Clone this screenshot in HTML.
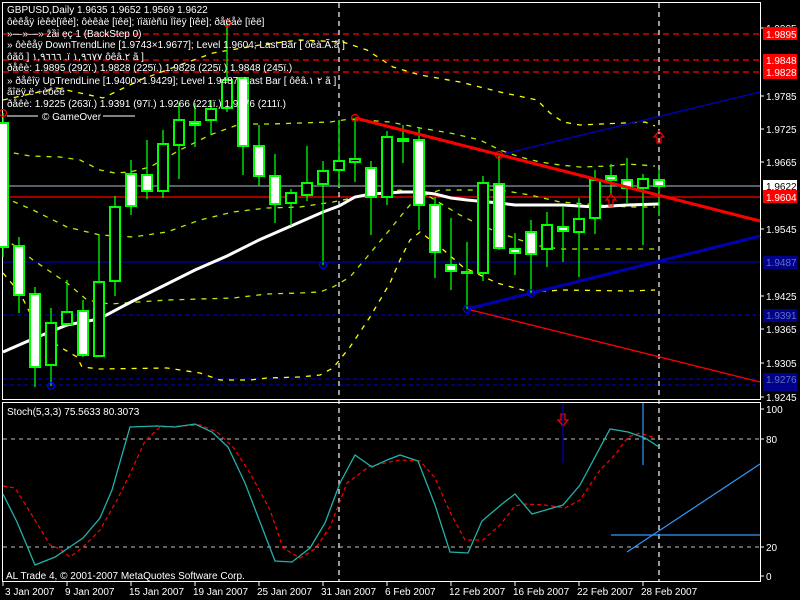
<!DOCTYPE html>
<html><head><meta charset="utf-8"><style>
html,body{margin:0;padding:0;background:#000;width:800px;height:600px;overflow:hidden}
svg{display:block}
text{font-family:"Liberation Sans","DejaVu Sans",sans-serif;font-size:10px;fill:#fff}
</style></head><body>
<svg width="800" height="600" viewBox="0 0 800 600" xmlns="http://www.w3.org/2000/svg">
<rect width="800" height="600" fill="#000"/>
<rect x="2.5" y="2.5" width="758" height="397" fill="none" stroke="#fff" stroke-width="1"/>
<rect x="2.5" y="402.5" width="758" height="179" fill="none" stroke="#fff" stroke-width="1"/>

<g stroke-width="1.2">
<line x1="3" y1="34" x2="760" y2="34" stroke="#f00" stroke-dasharray="6,4"/>
<line x1="3" y1="60" x2="760" y2="60" stroke="#f00" stroke-dasharray="6,4"/>
<line x1="3" y1="72" x2="760" y2="72" stroke="#f00" stroke-dasharray="6,4"/>
<line x1="3" y1="186" x2="760" y2="186" stroke="#8898a8"/>
<line x1="3" y1="197" x2="760" y2="197" stroke="#f00"/>
<line x1="3" y1="262" x2="760" y2="262" stroke="#0000a8"/>
<line x1="3" y1="315" x2="760" y2="315" stroke="#0000b0" stroke-dasharray="4,3"/>
<line x1="3" y1="379" x2="760" y2="379" stroke="#0000b0" stroke-dasharray="4,3"/>
<line x1="3" y1="385" x2="760" y2="385" stroke="#0000b0" stroke-dasharray="4,3"/>
</g>
<line x1="339" y1="3" x2="339" y2="582" stroke="#fff" stroke-dasharray="5,4" stroke-width="1.2"/>
<line x1="659" y1="3" x2="659" y2="582" stroke="#fff" stroke-dasharray="5,4" stroke-width="1.2"/>

<g fill="none" stroke-dasharray="5,6" stroke-width="1.3">
<polyline stroke="#ffff00" points="3,100 57,88 103,98 140,80 180,65 213,53 260,45 300,40 343,42 367,50 393,67 420,75 460,82 500,92 537,100 550,113 563,122 580,125 645,122 655,126"/>
<polyline stroke="#b0f000" points="3,151 30,156 60,157 80,160 100,170 115,173 130,172 150,167 180,150 210,135 240,124 270,124 300,123 330,122 350,119 390,122 420,128 450,133 480,140 500,150 520,157 540,162 560,165 580,167 610,166 627,164 655,166"/>
<polyline stroke="#b0f000" points="3,237 33,260 67,283 87,300 110,304 167,300 200,299 233,298 267,294 300,293 320,292 333,287 350,277 367,257 387,233 400,217 410,205 420,197 440,190 470,190 500,190 530,195 560,202 600,205 630,207 655,207"/>
<polyline stroke="#b0f000" points="3,197 33,210 67,227 100,235 133,237 167,232 200,220 233,212 267,208 300,207 333,202 367,195 400,190 430,197 460,215 480,225 500,233 520,240 540,246 560,249 600,249 655,249"/>
<polyline stroke="#ffff00" points="3,273 20,293 30,313 40,333 60,347 77,357 82,367 100,369 167,368 200,373 220,380 250,380 267,378 300,377 320,375 333,368 350,347 370,317 390,283 400,260 410,240 420,232 440,247 463,267 497,283 530,292 563,290 630,291 655,290"/>
</g>

<line x1="499" y1="155" x2="760" y2="92" stroke="#0000c0" stroke-width="1.3"/>
<line x1="467" y1="309" x2="760" y2="382" stroke="#f00" stroke-width="1.3"/>
<line x1="467" y1="309" x2="760" y2="236" stroke="#0000b0" stroke-width="3"/>

<polyline fill="none" stroke="#fff" stroke-width="3" points="3,352 35,338 67,325 99,319 131,302 163,286 195,270 227,256 259,240 291,226 323,212 339,206 355,197 371,194 403,192 419,192 435,194 451,198 467,200 499,203 515,205 563,205 579,206 595,207 611,206 627,205 659,204"/>

<g stroke="#00ff00" stroke-width="1.3">
<line x1="3" y1="113" x2="3" y2="257"/><line x1="19" y1="237" x2="19" y2="313"/><line x1="35" y1="287" x2="35" y2="387"/><line x1="51" y1="308" x2="51" y2="386"/><line x1="67" y1="280" x2="67" y2="325"/><line x1="83" y1="300" x2="83" y2="357"/><line x1="99" y1="235" x2="99" y2="357"/><line x1="115" y1="196" x2="115" y2="296"/><line x1="131" y1="160" x2="131" y2="215"/><line x1="147" y1="140" x2="147" y2="199"/><line x1="163" y1="130" x2="163" y2="198"/><line x1="179" y1="103" x2="179" y2="179"/><line x1="195" y1="103" x2="195" y2="147"/><line x1="211" y1="100" x2="211" y2="135"/><line x1="227" y1="23" x2="227" y2="112"/><line x1="243" y1="82" x2="243" y2="175"/><line x1="259" y1="125" x2="259" y2="186"/><line x1="275" y1="154" x2="275" y2="223"/><line x1="291" y1="189" x2="291" y2="226"/><line x1="307" y1="146" x2="307" y2="201"/><line x1="323" y1="161" x2="323" y2="265"/><line x1="339" y1="120" x2="339" y2="187"/><line x1="355" y1="118" x2="355" y2="182"/><line x1="371" y1="161" x2="371" y2="235"/><line x1="387" y1="131" x2="387" y2="205"/><line x1="403" y1="125" x2="403" y2="163"/><line x1="419" y1="127" x2="419" y2="230"/><line x1="435" y1="197" x2="435" y2="278"/><line x1="451" y1="218" x2="451" y2="290"/><line x1="467" y1="242" x2="467" y2="309"/><line x1="483" y1="176" x2="483" y2="281"/><line x1="499" y1="155" x2="499" y2="250"/><line x1="515" y1="233" x2="515" y2="275"/><line x1="531" y1="220" x2="531" y2="293"/><line x1="547" y1="212" x2="547" y2="267"/><line x1="563" y1="206" x2="563" y2="262"/><line x1="579" y1="198" x2="579" y2="277"/><line x1="595" y1="170" x2="595" y2="234"/><line x1="611" y1="164" x2="611" y2="195"/><line x1="627" y1="158" x2="627" y2="203"/><line x1="643" y1="174" x2="643" y2="245"/><line x1="659" y1="170" x2="659" y2="216"/>
</g>
<g stroke="#00ff00" stroke-width="2">
<rect x="-2" y="123" width="10" height="124" fill="#fff"/>
<rect x="14" y="246" width="10" height="49" fill="#fff"/>
<rect x="30" y="294" width="10" height="73" fill="#fff"/>
<rect x="46" y="323" width="10" height="42" fill="#000"/>
<rect x="62" y="312" width="10" height="12" fill="#000"/>
<rect x="78" y="311" width="10" height="44" fill="#fff"/>
<rect x="94" y="282" width="10" height="74" fill="#000"/>
<rect x="110" y="207" width="10" height="74" fill="#000"/>
<rect x="126" y="174" width="10" height="32" fill="#fff"/>
<rect x="142" y="175" width="10" height="16" fill="#fff"/>
<rect x="158" y="144" width="10" height="47" fill="#000"/>
<rect x="174" y="120" width="10" height="25" fill="#000"/>
<rect x="190" y="122" width="10" height="3" fill="#fff"/>
<rect x="206" y="109" width="10" height="11" fill="#000"/>
<rect x="222" y="80" width="10" height="28" fill="#000"/>
<rect x="238" y="78" width="10" height="68" fill="#fff"/>
<rect x="254" y="146" width="10" height="30" fill="#fff"/>
<rect x="270" y="176" width="10" height="28" fill="#fff"/>
<rect x="286" y="193" width="10" height="10" fill="#000"/>
<rect x="302" y="183" width="10" height="12" fill="#000"/>
<rect x="318" y="171" width="10" height="13" fill="#000"/>
<rect x="334" y="161" width="10" height="9" fill="#000"/>
<rect x="350" y="159" width="10" height="3" fill="#000"/>
<rect x="366" y="168" width="10" height="29" fill="#fff"/>
<rect x="382" y="137" width="10" height="60" fill="#000"/>
<rect x="398" y="139" width="10" height="2" fill="#fff"/>
<rect x="414" y="140" width="10" height="65" fill="#fff"/>
<rect x="430" y="205" width="10" height="47" fill="#fff"/>
<rect x="446" y="265" width="10" height="6" fill="#fff"/>
<rect x="462" y="272" width="10" height="1" fill="#0f0"/>
<rect x="478" y="183" width="10" height="90" fill="#000"/>
<rect x="494" y="184" width="10" height="64" fill="#fff"/>
<rect x="510" y="249" width="10" height="4" fill="#fff"/>
<rect x="526" y="232" width="10" height="22" fill="#fff"/>
<rect x="542" y="225" width="10" height="24" fill="#000"/>
<rect x="558" y="227" width="10" height="4" fill="#fff"/>
<rect x="574" y="219" width="10" height="13" fill="#000"/>
<rect x="590" y="180" width="10" height="38" fill="#000"/>
<rect x="606" y="176" width="10" height="4" fill="#fff"/>
<rect x="622" y="180" width="10" height="8" fill="#fff"/>
<rect x="638" y="179" width="10" height="9" fill="#000"/>
<rect x="654" y="180" width="10" height="6" fill="#fff"/>
</g>

<line x1="355" y1="118" x2="760" y2="221" stroke="#f00" stroke-width="3"/>

<g fill="none" stroke-width="1.2">
<circle cx="355" cy="118" r="3.5" stroke="#f00"/><circle cx="499" cy="155" r="3.5" stroke="#f00"/><circle cx="227" cy="23" r="3.5" stroke="#f00"/><circle cx="3" cy="113" r="3.5" stroke="#f00"/>
<circle cx="323" cy="265" r="3.5" stroke="#00f"/><circle cx="51" cy="386" r="3.5" stroke="#00f"/><circle cx="467" cy="309" r="3.5" stroke="#00f"/><circle cx="531" cy="293" r="3.5" stroke="#00f"/>
</g>
<g fill="none" stroke="#f00" stroke-width="1.2">
<path d="M659,131 l-5,6 h3 v6 h4 v-6 h3 z"/>
<path d="M611,194 l-5,6 h3 v6 h4 v-6 h3 z"/>
<path d="M563,426 l-5,-6 h3 v-6 h4 v6 h3 z"/>
</g>

<g>
<text x="7" y="13">GBPUSD,Daily  1.9635 1.9652 1.9569 1.9622</text>
<text x="7" y="25">ôèêåÿ íèêè[ïêë]; ôèêàë [ïêë]; ïîäïèñü Ïîëÿ [ïêë]; ðåëåè [ïêë]</text>
<text x="7" y="37">»—»—» ẑầi ẹç 1 (BackStep 0)</text>
<text x="7" y="48">» ôèêåÿ DownTrendLine [1.9743×1.9677]; Level 1.9604; Last Bar [ ôêà.Ã.ã ]</text>
<text x="7" y="60">ôãõ ] ١,٩٦٦٦ .ï ١,٩٦٧٧ ôêâ.٢ ã ]</text>
<text x="7" y="71">ðåêè: 1.9895 (292ï.) 1.9828 (225ï.) 1.9828 (225ï.) 1.9848 (245ï.)</text>
<text x="7" y="84">» ðåêîÿ UpTrendLine [1.9400×1.9429]; Level 1.9487; Last Bar [ ôêâ.٢ ١ ã ]</text>
<text x="7" y="95">ãîëÿ ë ÷èôèê</text>
<text x="7" y="107">ðåêè: 1.9225 (263ï.) 1.9391 (97ï.) 1.9266 (221ï.) 1.9276 (211ï.)</text>
<line x1="7" y1="116" x2="38" y2="116" stroke="#fff"/>
<text x="42" y="120">© GameOver</text>
<line x1="103" y1="116" x2="135" y2="116" stroke="#fff"/>
</g>

<line x1="3" y1="439" x2="760" y2="439" stroke="#c0c0c0" stroke-dasharray="4,4"/>
<line x1="3" y1="547" x2="760" y2="547" stroke="#c0c0c0" stroke-dasharray="4,4"/>
<polyline fill="none" stroke="#f00" stroke-width="1.2" stroke-dasharray="4,3" points="3,486 15,488 35,520 50,545 60,549 70,557 83,547 100,530 117,500 130,474 145,441 160,427 180,426 200,425 217,432 233,447 250,473 270,510 283,548 300,558 315,549 330,527 347,483 370,466 400,460 420,461 435,478 450,512 465,540 483,540 500,525 515,506 525,504 545,505 565,508 580,500 600,470 615,455 628,437 640,433 655,438"/>
<polyline fill="none" stroke="#20b2aa" stroke-width="1.3" points="3,494 17,522 35,565 55,557 83,538 100,518 112,490 130,427 157,426 175,427 195,424 212,432 228,447 245,483 275,561 292,562 310,548 325,523 340,483 355,455 372,467 387,460 400,455 418,461 435,505 450,552 468,553 482,521 502,504 515,494 532,514 563,505 580,485 610,429 628,432 645,438 659,447"/>
<line x1="563" y1="403" x2="563" y2="463" stroke="#0000c0" stroke-width="1.2"/>
<line x1="643" y1="403" x2="643" y2="465" stroke="#3399ff" stroke-width="1.2"/>
<line x1="611" y1="535" x2="760" y2="535" stroke="#3399ff" stroke-width="1.2"/>
<line x1="627" y1="552" x2="760" y2="464" stroke="#3399ff" stroke-width="1.2"/>
<text x="7" y="415">Stoch(5,3,3) 75.5633 80.3073</text>
<text x="6" y="579">AL Trade 4, © 2001-2007 MetaQuotes Software Corp.</text>

<g stroke="#fff">
<line x1="760" y1="28" x2="764" y2="28"/><line x1="760" y1="96" x2="764" y2="96"/><line x1="760" y1="129" x2="764" y2="129"/><line x1="760" y1="162" x2="764" y2="162"/><line x1="760" y1="229" x2="764" y2="229"/><line x1="760" y1="296" x2="764" y2="296"/><line x1="760" y1="329" x2="764" y2="329"/><line x1="760" y1="363" x2="764" y2="363"/><line x1="760" y1="397" x2="764" y2="397"/>
<line x1="760" y1="409" x2="764" y2="409"/><line x1="760" y1="439" x2="764" y2="439"/><line x1="760" y1="547" x2="764" y2="547"/><line x1="760" y1="576" x2="764" y2="576"/>
</g>
<g>
<text x="766" y="32">1.9905</text>
<text x="766" y="100">1.9785</text>
<text x="766" y="133">1.9725</text>
<text x="766" y="166">1.9665</text>
<text x="766" y="233">1.9545</text>
<text x="766" y="300">1.9425</text>
<text x="766" y="333">1.9365</text>
<text x="766" y="367">1.9305</text>
<text x="766" y="401">1.9245</text>
<text x="766" y="413">100</text>
<text x="766" y="443">80</text>
<text x="766" y="551">20</text>
<text x="766" y="580">0</text>
</g>
<rect x="763" y="27" width="34" height="13" fill="#f00"/><text x="766" y="38">1.9895</text>
<rect x="763" y="54" width="34" height="13" fill="#f00"/><text x="766" y="64">1.9848</text>
<rect x="763" y="66" width="34" height="13" fill="#f00"/><text x="766" y="76">1.9828</text>
<rect x="763" y="180" width="34" height="13" fill="#fff"/><text x="766" y="190" style="fill:#000">1.9622</text>
<rect x="763" y="190" width="34" height="13" fill="#f00"/><text x="766" y="201">1.9604</text>
<rect x="763" y="256" width="34" height="13" fill="#00008b"/><text x="766" y="266" style="fill:#6070c0">1.9487</text>
<rect x="763" y="309" width="34" height="13" fill="#00008b"/><text x="766" y="319" style="fill:#6070c0">1.9391</text>
<rect x="763" y="373" width="34" height="18" fill="#00008b"/><text x="766" y="383" style="fill:#6070c0">1.9276</text>

<g stroke="#fff"><line x1="3" y1="582" x2="3" y2="586"/><line x1="67" y1="582" x2="67" y2="586"/><line x1="131" y1="582" x2="131" y2="586"/><line x1="195" y1="582" x2="195" y2="586"/><line x1="259" y1="582" x2="259" y2="586"/><line x1="323" y1="582" x2="323" y2="586"/><line x1="387" y1="582" x2="387" y2="586"/><line x1="451" y1="582" x2="451" y2="586"/><line x1="515" y1="582" x2="515" y2="586"/><line x1="579" y1="582" x2="579" y2="586"/><line x1="643" y1="582" x2="643" y2="586"/></g>
<g>
<text x="5" y="595">3 Jan 2007</text><text x="65" y="595">9 Jan 2007</text><text x="129" y="595">15 Jan 2007</text><text x="193" y="595">19 Jan 2007</text><text x="257" y="595">25 Jan 2007</text><text x="321" y="595">31 Jan 2007</text><text x="385" y="595">6 Feb 2007</text><text x="449" y="595">12 Feb 2007</text><text x="513" y="595">16 Feb 2007</text><text x="577" y="595">22 Feb 2007</text><text x="641" y="595">28 Feb 2007</text>
</g>
</svg>
</body></html>
